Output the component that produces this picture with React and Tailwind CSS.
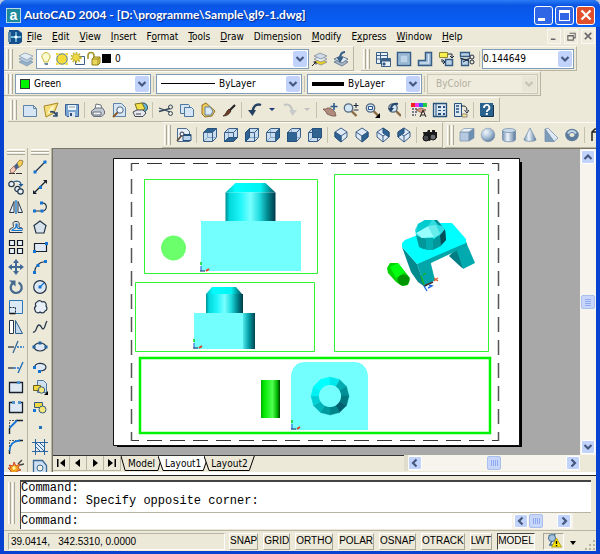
import React from "react";

const S = "#3a5f86";
const D = "#1d2b3f";
const B = "#1474d4";
const Y = "#f0d840";

function Cube({ face }) {
  const faces = {
    top: "1.5,5.5 5.5,1.5 14.5,1.5 10.5,5.5",
    bottom: "1.5,14.5 5.5,10.5 14.5,10.5 10.5,14.5",
    left: "1.5,5.5 5.5,1.5 5.5,10.5 1.5,14.5",
    right: "10.5,5.5 14.5,1.5 14.5,10.5 10.5,14.5",
    front: "1.5,5.5 10.5,5.5 10.5,14.5 1.5,14.5",
    back: "5.5,1.5 14.5,1.5 14.5,10.5 5.5,10.5",
  };
  return (
    <g strokeLinejoin="round" strokeWidth="1">
      <path d="M1.5 5.5 5.5 1.5h9v9l-4 4h-9z" fill="#c9dcf0" stroke={S} />
      <path d="M5.5 1.5v9h9M5.5 10.5l-4 4" fill="none" stroke="#86a8c8" />
      <polygon points={faces[face]} fill="#2f6594" stroke="#24507a" />
      <path d="M1.5 5.5h9v9M10.5 5.5l4-4" fill="none" stroke={S} />
    </g>
  );
}

function Iso({ face }) {
  const faces = {
    sw: "2,5 8,9 8,15 2,10",
    se: "8,9 14,5 14,10 8,15",
    ne: "8,1 14,5 14,10 8,6",
    nw: "2,5 8,1 8,6 2,10",
  };
  return (
    <g strokeLinejoin="round">
      <path d="M8 1 14 5v5l-6 5-6-5V5z" fill="#dfeaf6" stroke={S} />
      <polygon points={faces[face]} fill="#2f6594" stroke="#24507a" />
      <path d="M2 5l6 4 6-4M8 9v6" fill="none" stroke={S} />
    </g>
  );
}

const Lens = ({ x = 6.5, y = 6 }) => (
  <g>
    <path d={`M${x + 3} ${y + 3} l5 5`} stroke="#8a6a45" strokeWidth="2.4" />
    <circle cx={x} cy={y} r="4.2" fill="#d3e6f5" stroke="#55697c" strokeWidth="1.3" />
  </g>
);

const icons = {
  layers: (
    <g stroke="#7d93ab" strokeWidth=".7">
      <path d="M1 11l6-3 8 3-6 4z" fill="#93b0cd" />
      <path d="M1 8l6-3 8 3-6 4z" fill="#b9cde0" />
      <path d="M1 5l6-3 8 3-6 4z" fill="#e2ecf5" />
    </g>
  ),
  bulb: (
    <g>
      <path d="M8 1.5a4.2 4.2 0 0 1 2.5 7.5L10 11H6L5.500 9A4.200 4.200 0 0 1 8 1.500z" fill="#fdfbd0" stroke="#c9b83a" />
      <path d="M6 12h4v2H7z" fill="#6b8aa8" />
    </g>
  ),
  sun: (
    <g>
      <path d="M2 2h12v12H2z" fill="#f8f0a0" />
      <path d="M2 2h2v2H2zM12 2h2v2h-2zM2 12h2v2H2zM12 12h2v2h-2z" fill={Y} />
      <circle cx="8" cy="8" r="5.200" fill="#f6dc38" stroke="#5b86a8" />
    </g>
  ),
  sunView: (
    <g>
      <path d="M5.500 5.500h9v8h-9z" fill="#fff" stroke={S} />
      <circle cx="6" cy="6.500" r="4.600" fill="none" stroke="#c4b428" strokeWidth="2" strokeDasharray="1.500 1.500" />
      <circle cx="6" cy="6.500" r="3.600" fill={Y} stroke="#b5a52c" strokeWidth=".7" />
    </g>
  ),
  lock: (
    <g>
      <path d="M2 8V4.500a3 3 0 0 1 6 0V8" fill="none" stroke="#a3962c" strokeWidth="1.600" />
      <path d="M6 8l2-2h6v6l-2 2H6z" fill="#e9d75c" stroke="#8f7e18" />
      <path d="M6 8h6v6M12 8l2-2" fill="none" stroke="#8f7e18" strokeWidth=".8" />
    </g>
  ),
  layerCurrent: (
    <g stroke="#74808c" strokeWidth=".7">
      <path d="M2 11l6-3 7 3-6 3z" fill="#f0d020" />
      <path d="M2 8l6-3 7 3-6 3z" fill="#e8eef5" />
      <path d="M2 5l6-3 7 3-6 3z" fill="#cfdbe8" />
      <path d="M0 15l4-4M1.500 11H4v2.500" stroke="#222" strokeWidth="1" fill="none" />
    </g>
  ),
  layerPrev: (
    <g>
      <path d="M1 11l7-3 7 3-6 4z" fill="#a9b9ca" stroke="#6c7f94" />
      <path d="M1 8l7-3 7 3-6 4z" fill="#e2eaf2" stroke="#6c7f94" />
      <path d="M12 1C8 1 7 4 7 8M4.500 6L7 10l2.500-4" fill="none" stroke={S} strokeWidth="2" />
    </g>
  ),
  vports: (
    <g fill="#e7f0f8" stroke={S}>
      <path d="M1.500 1.500h11v11h-11z" />
      <path d="M1.500 4.500h11M5.500 1.500v11M1.500 8h4" />
      <path d="M6.500 7.500h9v8h-9z" />
      <path d="M7 8h8v2H7zM8 12h2v2H8z" fill={S} />
    </g>
  ),
  vport: (
    <g>
      <path d="M1.500 1.500h13v13h-13z" fill="#a9c4dd" stroke="#345c85" strokeWidth="1.500" />
      <path d="M4 4h8v8H4z" fill="#bcd3e8" stroke="#86a8c8" />
    </g>
  ),
  polyVport: (
    <g>
      <path d="M8.500 1.500h6v13h-13v-5h7z" fill="#a4c1dc" stroke="#345c85" strokeWidth="1.500" />
      <path d="M11.500 3v9H3" fill="none" stroke="#dbe8f4" />
    </g>
  ),
  convert: (
    <g>
      <path d="M1.500 1.500h8v5h-8z" fill="#f7ee50" stroke="#8c8530" />
      <path d="M7.500 8.500h7v6h-7z" fill="#b9d0e5" stroke="#345c85" strokeWidth="1.500" />
      <path d="M10 3h4v3M12 5l2 2 2-2M4 8v3h2M5 9l2 2-2 2" fill="none" stroke={D} />
    </g>
  ),
  clipVport: (
    <g>
      <path d="M1.500 1.500h9v4h-9zM2.500 8.500h7v6h-7z" fill="#b9d0e5" stroke="#345c85" strokeWidth="1.300" />
      <path d="M1 7l9 3M4 11l7-4" stroke={D} />
      <circle cx="13" cy="6" r="2" fill="none" stroke={D} />
      <circle cx="13" cy="11" r="2" fill="none" stroke={D} />
    </g>
  ),
  doc: (
    <path d="M1.500 3.500h10l3 3v8h-13zM11.500 3.500v3h3" fill="#d5e5f4" stroke="#5f84a8" />
  ),
  open: (
    <g>
      <path d="M1 4l5-1 9-2-4 10-8 4z" fill="#f4dc78" stroke="#a88828" />
      <path d="M4 12l4-7 4-2-3 7z" fill="#fff6c8" />
      <path d="M7 10c3-1 5 0 6 3M14 10v4h-4" fill="none" stroke="#2c4a70" strokeWidth="1.500" />
    </g>
  ),
  save: (
    <g>
      <path d="M1.500 2.500h13v12H3l-1.500-1.500z" fill="#7ba6d2" stroke="#3a5f94" />
      <path d="M4 3h8v5H4z" fill="#eef4fa" />
      <path d="M5 10h6v5H5z" fill="#dbe6f0" />
      <path d="M6 11h2v3H6z" fill="#2f4f78" />
      <path d="M5 5h6" stroke="#8aa" />
    </g>
  ),
  print: (
    <g stroke="#5b6472" strokeWidth=".9">
      <path d="M5 7l1-5 5 1 1 5z" fill="#fff" />
      <path d="M1.500 9l4-3h7l2 3v3l-3 2.500h-8L1.500 12z" fill="#c3cad4" />
      <path d="M3 10h8v3H3z" fill="#eef1f5" />
    </g>
  ),
  preview: (
    <g>
      <path d="M2.500 1.500h8l4 4v9h-12z" fill="#d5e5f4" stroke="#5f84a8" />
      <path d="M7 10l-5 5" stroke="#8a5a2c" strokeWidth="2" />
      <circle cx="9" cy="8" r="3.200" fill="#eef6fc" stroke="#4b647d" />
    </g>
  ),
  publish: (
    <g>
      <circle cx="11" cy="5.500" r="4.500" fill="#63b8d8" stroke="#2f4658" />
      <path d="M3 2l7-1 3 6-7 3z" fill="#f2e04a" stroke="#80701c" />
      <path d="M1 10l4-2h6l3 3-3 3.500H3z" fill="#e5e8ee" stroke="#454b56" />
      <path d="M4 12h5" stroke="#444" />
    </g>
  ),
  cut: (
    <g fill="none" stroke="#35485d">
      <path d="M1 6l11 4M1 9.500l11-3" strokeWidth="1.300" />
      <circle cx="12.500" cy="5" r="2" />
      <circle cx="12.500" cy="11.500" r="2" />
    </g>
  ),
  copy: (
    <g fill="#d5e5f4" stroke="#4d779e">
      <path d="M1.500 2.500h8l1 1v8h-9z" />
      <path d="M5.500 5.500h7l2 2v7h-9z" />
    </g>
  ),
  paste: (
    <g>
      <path d="M2 3l4-2 9 8-3 5-7 1-3-3z" fill="#ecc95a" stroke="#94702a" />
      <path d="M5 5h5l3 4-2 4H5z" fill="#dbe9f6" stroke="#5f84a8" />
    </g>
  ),
  brush: (
    <g>
      <path d="M14 3L8 9" stroke="#222" strokeWidth="2.200" />
      <path d="M8 7l2 2c-2 4-5 5-8 5 3-1 3-5 6-7z" fill="#6d3d24" stroke="#32201a" strokeWidth=".7" />
    </g>
  ),
  undo: (
    <g fill="none" stroke="#234060">
      <path d="M14 3C9 1 5.500 5 5.500 11" strokeWidth="2.400" />
      <path d="M1 8l4.500 6L9 8z" fill="#234060" stroke="none" />
    </g>
  ),
  redo: (
    <g fill="none" stroke="#c2c4c4">
      <path d="M2 3c5-2 8.500 2 8.500 8" strokeWidth="2" />
      <path d="M7 8l3.500 6L15 8z" fill="#c9cbca" stroke="none" />
    </g>
  ),
  pan: (
    <g>
      <path d="M1 7l3 0 1-1 3 0 3 2 2 2 1 4-4 0-5-2-1-2z" fill="#b08a7c" stroke="#75574c" strokeWidth=".8" />
      <path d="M12 1v7M8.500 4.500h7" stroke="#2d5a8c" strokeWidth="1.600" />
    </g>
  ),
  zoomRt: (
    <g>
      <Lens x={5.5} y={6} />
      <path d="M13 1v5M10.500 3.500h5M10.500 8h5" stroke={D} strokeWidth="1.100" />
    </g>
  ),
  zoomWin: (
    <g>
      <Lens />
      <path d="M4.500 4.500h4v3h-4z" fill="#fff" stroke="#27558c" />
      <path d="M16 11v5h-5z" fill="#000" />
    </g>
  ),
  zoomPrev: (
    <g>
      <Lens x={8} y={6} />
      <path d="M13 2C9 1 6 3 6 7" fill="none" stroke="#23456c" strokeWidth="2" />
      <path d="M3 6l3 4 3-4z" fill="#23456c" />
    </g>
  ),
  props: (
    <g>
      <path d="M0 1h4v4H0z" fill="#e22" />
      <path d="M4 1h4v4H4z" fill="#e3e" />
      <path d="M8 1h4v4H8z" fill="#2a6be8" />
      <path d="M12 1h4v4h-4z" fill="#2c4" />
      <path d="M1 7h5M1 10h5M1 13h4" stroke="#557" strokeWidth="1.500" strokeDasharray="2 1" />
      <path d="M5 8l5-2 5 2-4 3z" fill="#d89c84" stroke="#7c4f3e" strokeWidth=".7" />
      <path d="M9 15l3-7 3 7M10 13h4" fill="none" stroke="#222" />
    </g>
  ),
  center: (
    <g>
      <path d="M1.500 1.500h13v13h-13z" fill="#dbe7f2" stroke="#27507a" strokeWidth="1.300" />
      <path d="M4 2v12" stroke="#27507a" />
      <path d="M6 4h3v2H6zM11 4h2v2h-2zM6 8h3v1H6zM11 8h2v1h-2zM6 11h3v2H6zM11 11h2v2h-2z" fill="#27507a" />
    </g>
  ),
  palettes: (
    <g>
      <path d="M1.500 1.500h7v13h-7z" fill="#dbe7f2" stroke="#27507a" />
      <path d="M3 4h3M3 7h3M3 10h3" stroke="#27507a" strokeWidth="1.500" />
      <path d="M8 4h3c2 0 3 2 3 5M11.500 8l2.500 3 2-3" fill="none" stroke={D} />
      <path d="M9 12h5v3H9z" fill="#f3e48a" stroke="#667" strokeWidth=".7" />
    </g>
  ),
  help: (
    <g>
      <path d="M1 1h13v13H1z" fill="#2a628e" />
      <path d="M2 14.500h12.500V3" fill="none" stroke="#16344f" />
      <path d="M5 6a2.700 2.700 0 1 1 4 2c-1 .7-1.200 1-1.200 2" fill="none" stroke="#fff" strokeWidth="1.800" />
      <path d="M6.800 11h2v2h-2z" fill="#fff" />
    </g>
  ),
  namedViews: (
    <g>
      <path d="M1.500 1.500h9l3 3v10h-12z" fill="#e6eef7" stroke="#4d6c8c" />
      <path d="M7 7.500h8v6H7z" fill="#bcd5ec" stroke="#24507a" />
      <path d="M7 7h8v2H7z" fill="#24507a" />
      <path d="M1 14l5-6" stroke="#6a4a30" strokeWidth="1.700" />
      <circle cx="6" cy="7" r="2" fill="#e8f2fa" stroke="#334" />
    </g>
  ),
  top: <Cube face="top" />,
  bottom: <Cube face="bottom" />,
  left: <Cube face="left" />,
  right: <Cube face="right" />,
  front: <Cube face="front" />,
  back: <Cube face="back" />,
  sw: <Iso face="sw" />,
  se: <Iso face="se" />,
  ne: <Iso face="ne" />,
  nw: <Iso face="nw" />,
  camera: (
    <g>
      <path d="M1 5h4l1-2h2v2h2V3h3v2h2v6l-4 1-1-2-2 4-4-1v-3H2z" fill="#1b1b1d" />
      <circle cx="4" cy="11" r="3" fill="#46484d" stroke="#111" />
      <circle cx="11" cy="10" r="3" fill="#6b6e74" stroke="#111" />
    </g>
  ),
  box: (
    <g stroke="#7a93ae" strokeWidth=".7">
      <path d="M1 5h9v9H1z" fill="#b5cae0" />
      <path d="M1 5l4-3.500h10L10 5z" fill="#e7eff7" />
      <path d="M10 5l5-3.500V11l-5 3z" fill="#6d8fb2" />
    </g>
  ),
  sphere: <circle cx="8" cy="8" r="6.800" fill="url(#ball)" stroke="#7d93ad" strokeWidth=".6" />,
  cylinder: (
    <g stroke="#6f8aa8" strokeWidth=".7">
      <path d="M1.500 3.500v9c0 3 13 3 13 0v-9z" fill="url(#tube)" />
      <ellipse cx="8" cy="3.500" rx="6.500" ry="2" fill="#c9daea" />
    </g>
  ),
  cone: <path d="M8 1l6 11.500c0 2.500-12 2.500-12 0z" fill="url(#tube)" stroke="#6f8aa8" strokeWidth=".7" />,
  wedge: (
    <g stroke="#6f8aa8" strokeWidth=".7">
      <path d="M2 2l3-1 10 10-4 3.500z" fill="#dfe9f3" />
      <path d="M2 2l9 12.500H2z" fill="#7d9cbc" />
    </g>
  ),
  torus: (
    <g>
      <ellipse cx="8" cy="8" rx="4.700" ry="4.200" fill="none" stroke="#5d7c9d" strokeWidth="4.200" />
      <path d="M4 6.500c2-3.500 6-3.500 8 0" fill="none" stroke="#c4d6e8" strokeWidth="2" />
    </g>
  ),
  extrude: (
    <g fill="none" stroke="#222">
      <path d="M2 14V5l3-3h11M2 5h14" strokeWidth="1.500" />
    </g>
  ),
  erase: (
    <g>
      <path d="M1 14.500h13" stroke="#333" strokeDasharray="6 1" />
      <path d="M9 4l3-3 3 1-1 4-4 3z" fill="#f5cf55" stroke="#8a7235" strokeWidth=".8" />
      <path d="M6 7l3-3 2 4-3 3z" fill="#47628e" />
      <path d="M2 11l4-4 2 4-3 3H3z" fill="#f2c9bd" stroke="#8c594a" strokeWidth=".8" />
    </g>
  ),
  copyObj: (
    <g fill="#e8f0f8" stroke="#25364a" strokeWidth="1.200">
      <circle cx="3.500" cy="5" r="2.700" />
      <circle cx="9.500" cy="10" r="2.700" />
      <circle cx="12.500" cy="12.500" r="2.700" />
      <path d="M6 2.500c4-1 7 0 7 3" fill="none" stroke="#1e5a94" />
      <path d="M10.500 5l2.500 3 2.500-3z" fill="#1e5a94" stroke="none" />
    </g>
  ),
  mirror: (
    <g>
      <path d="M6 2.500v11H1.500zM10 2.500v11h4.500z" fill="#e8f0f8" stroke="#25364a" />
      <path d="M8 1v14" stroke={B} strokeWidth="1.300" />
    </g>
  ),
  offset: (
    <g fill="none">
      <path d="M14.500 13.500h-13v-2c0-3 4-2 4-4s-2-5 2.500-5 3 3 3 5 3.500 0 3.500 3" stroke="#25364a" />
      <path d="M14.500 11.500H4c0-2 4-1 4-4V5h1v3c0 2 3 1.500 5 1.500" stroke={B} strokeWidth="1.200" />
    </g>
  ),
  array: (
    <path d="M1.500 1.500h5v5h-5zM9.500 1.500h5v5h-5zM1.500 9.500h5v5h-5zM9.500 9.500h5v5h-5z" fill="#eef4fa" stroke="#111a28" strokeWidth="1.200" />
  ),
  move: (
    <path d="M8 0l3 4H9v3h3V5l4 3-4 3V9H9v3h2l-3 4-3-4h2V9H4v2L0 8l4-3v2h3V4H5z" fill="#3f6a98" />
  ),
  rotate: (
    <g fill="none" stroke="#44688e">
      <path d="M10.500 3.500a5.500 5.500 0 1 1-5.500.5" strokeWidth="2.200" />
      <path d="M1 1.500h6.500v6z" fill="#44688e" stroke="none" />
    </g>
  ),
  scale: (
    <g>
      <path d="M1.500 1.500h13v13h-13z" fill="#dce9f5" stroke="#2b77b8" />
      <path d="M1.500 8.500h6v6" fill="none" stroke="#16283c" strokeDasharray="2 1" />
      <path d="M1.500 14.500h6" stroke="#111" strokeWidth="1.500" />
    </g>
  ),
  stretch: (
    <g>
      <path d="M1.500 1.500h4v13h-4z" fill="#fff" stroke="#25364a" />
      <path d="M7.500 1.500l7 13h-7z" fill="#c6daec" stroke="#2b5f94" />
    </g>
  ),
  trim: (
    <g>
      <path d="M0 8h6" stroke="#25364a" strokeWidth="1.300" />
      <path d="M9 8h7" stroke={B} strokeWidth="1.300" strokeDasharray="2 1" />
      <path d="M5 14l5-12" stroke="#2b5f94" strokeWidth="1.200" />
    </g>
  ),
  extend: (
    <g>
      <path d="M0 9h6" stroke="#25364a" strokeWidth="1.300" />
      <path d="M6 9h6" stroke={B} strokeWidth="1.300" strokeDasharray="2 1" />
      <path d="M10 14l5-11" stroke="#1668b0" strokeWidth="1.300" />
    </g>
  ),
  breakPt: (
    <g>
      <path d="M1.500 3.500h13v10h-13z" fill="#dfe9f3" stroke="#16202e" strokeWidth="1.300" />
      <path d="M9 2h3v3H9z" fill="#4c93d0" />
    </g>
  ),
  break: (
    <g>
      <path d="M5 3.500H1.500v10h13v-10H11" fill="#dfe9f3" stroke="#16202e" strokeWidth="1.300" />
      <path d="M4 2h3v3H4zM10 2h3v3h-3z" fill="#4c93d0" />
    </g>
  ),
  chamfer: (
    <g fill="none">
      <path d="M1.500 15V9M8 1.500h7" stroke="#16202e" strokeWidth="1.400" />
      <path d="M1.500 8V1.500H8" stroke="#555" strokeDasharray="2 1" />
      <path d="M1.500 9L9 1.500" stroke={B} strokeWidth="1.800" />
    </g>
  ),
  fillet: (
    <g fill="none">
      <path d="M1.500 15v-4M11 1.500h4" stroke="#16202e" strokeWidth="1.400" />
      <path d="M1.500 8V1.500H8" stroke="#555" strokeDasharray="2 1" />
      <path d="M1.500 12C2 5 5 2 12 1.500" stroke={B} strokeWidth="1.800" />
    </g>
  ),
  explode: (
    <g>
      <path d="M0 9l3 0-2-3 4 1 1-4 2 4 4-2-2 4 3 2-4 1 0 4-3-3-4 3 1-4z" fill="#f4a320" stroke="#c03018" strokeWidth=".8" />
      <circle cx="6" cy="9" r="1.700" fill="#fff79a" />
      <path d="M10 5l4-4M12 6l4-1" stroke="#444" strokeWidth="1.400" />
    </g>
  ),
  line: (
    <g>
      <path d="M3 13L13 3" stroke="#25364a" strokeWidth="1.300" />
      <path d="M1.500 11.500h3v3h-3zM11.500 1.500h3v3h-3z" fill={B} />
    </g>
  ),
  xline: (
    <g>
      <path d="M2 14L14 2" stroke="#16202e" strokeWidth="1.200" />
      <path d="M1 15v-4l4 4zM15 1v4l-4-4z" fill="#16202e" />
      <path d="M7 7h3v3H7z" fill={B} />
    </g>
  ),
  pline: (
    <g fill="none">
      <path d="M2 12h8M9 4c7-1 7 8 1 8" stroke="#25364a" strokeWidth="1.200" />
      <path d="M1 10.500h3v3H1zM8.500 10.500h3v3h-3zM8 2.500h3v3H8z" fill={B} />
    </g>
  ),
  polygon: <path d="M8 2l6 4.500L12 14H4L2 6.500z" fill="#d7e2ec" stroke="#25364a" strokeWidth="1.200" />,
  rect: (
    <g>
      <path d="M2.500 4.500h12v8h-12z" fill="#dfe9f3" stroke="#16202e" strokeWidth="1.200" />
      <path d="M1 11h3v3H1zM13 3h3v3h-3z" fill={B} />
    </g>
  ),
  arc: (
    <g fill="none">
      <path d="M2.500 13.500C3 7 7 3 13.500 2.500" stroke="#25364a" strokeWidth="1.200" />
      <path d="M1 12h3v3H1zM4.500 5h3v3h-3zM12 1h3v3h-3z" fill={B} />
    </g>
  ),
  circle: (
    <g>
      <circle cx="8" cy="8" r="6.300" fill="#dfe9f3" stroke="#25364a" strokeWidth="1.200" />
      <path d="M8 8l4-4" stroke={B} strokeWidth="1.300" />
      <path d="M6.500 6.500h3v3h-3z" fill={B} />
    </g>
  ),
  revcloud: (
    <path d="M5 3a3 3 0 0 1 5 0 3 3 0 0 1 4 4 3 3 0 0 1-1 5 3 3 0 0 1-5 1 3 3 0 0 1-5-2 3 3 0 0 1 1-4 2.500 2.500 0 0 1 1-4z" fill="#e8eff6" stroke="#25364a" strokeWidth="1.200" />
  ),
  spline: <path d="M1 13c4 1 3-7 6-7s2 4 4 4 2-5 4-8" fill="none" stroke="#25364a" strokeWidth="1.300" />,
  ellipse: (
    <g>
      <ellipse cx="8" cy="8" rx="6" ry="4" fill="#dfe9f3" stroke="#25364a" strokeWidth="1.200" />
      <path d="M0.500 6.500h3v3h-3zM12.500 6.500h3v3h-3zM6.500 2.500h3v3h-3z" fill="#1d5f9f" />
    </g>
  ),
  ellipseArc: (
    <g>
      <path d="M3 9c-2-6 11-6 11-1 0 3-4 4-7 4" fill="#dfe9f3" stroke="#25364a" strokeWidth="1.200" />
      <path d="M1 7h3v3H1zM6 11h3v3H6z" fill={B} />
    </g>
  ),
  insert: (
    <g>
      <path d="M5.500 1.500h6l3 3v9h-9z" fill="#cfe0f0" stroke="#4d779e" />
      <path d="M1.500 6.500h7v5h-7z" fill={Y} stroke="#6b6318" />
      <circle cx="9.500" cy="11" r="3.200" fill="#f6e97a" stroke="#345c85" />
      <path d="M16 12v4h-4z" fill="#000" />
    </g>
  ),
  block: (
    <g>
      <path d="M2.500 3.500h8v5h-8z" fill={Y} stroke="#345c85" />
      <circle cx="10.500" cy="10.500" r="3.500" fill="#f6e97a" stroke="#345c85" />
      <path d="M1 10h3v3H1z" fill={B} />
    </g>
  ),
  point: <path d="M7 7h3v3H7z" fill="#2272b8" />,
  hatch: (
    <g>
      <path d="M3.500 3.500h9v9h-9z" fill="#e5eef7" stroke="#27507a" />
      <path d="M3.500 0v16M12.500 0v16M0 3.500h16M0 12.500h16M4 8l4 4M4 4l8 8M8 4l4 4" stroke="#2b65a0" />
    </g>
  ),
  region: (
    <g>
      <path d="M1.500 1.500h9l4 5v8h-13z" fill="#cfe0f0" stroke="#3a6a98" strokeWidth="1.300" />
      <circle cx="8" cy="9" r="3" fill="#f3f1e4" stroke="#3a6a98" />
    </g>
  ),
};

function Glyph({ name }) {
  return (
    <svg viewBox="0 0 16 16" className="h-4 w-4 shrink-0" aria-hidden="true">
      {icons[name]}
    </svg>
  );
}

function Tool({ name, tall }) {
  return (
    <button
      type="button"
      aria-label={name}
      className={
        tall
          ? "flex h-5 w-[21px] shrink-0 items-center justify-center"
          : "flex h-[21px] w-[21px] shrink-0 items-center justify-center"
      }
    >
      <Glyph name={name} />
    </button>
  );
}

function Grip() {
  return (
    <span className="mx-[2px] flex h-5 shrink-0 gap-px">
      <span className="w-[3px] border-l border-r border-l-white border-r-[#aca899]" />
      <span className="w-[3px] border-l border-r border-l-white border-r-[#aca899]" />
    </span>
  );
}

const Sep = () => <span className="mx-[2px] h-4 w-px shrink-0 bg-[#c5c2b0]" />;

function Bar({ label, children }) {
  return (
    <div
      role="toolbar"
      aria-label={label}
      className="flex shrink-0 items-center border-b border-r border-t border-b-[#b8b5a2] border-r-[#b8b5a2] border-t-[#fbfaf5] pr-[2px]"
    >
      <Grip />
      {children}
    </div>
  );
}

function Chevron({ dir = "down", color = "#45597e" }) {
  const d = {
    down: "M1.500 3L5 6.500 8.500 3",
    up: "M1.500 7L5 3.500 8.500 7",
    left: "M6.500 1.500L3 5l3.500 3.500",
    right: "M3.500 1.500L7 5 3.500 8.500",
  }[dir];
  return (
    <svg viewBox="0 0 10 10" className="h-[10px] w-[10px]" aria-hidden="true">
      <path d={d} fill="none" stroke={color} strokeWidth="2.200" />
    </svg>
  );
}

function Combo({ label, value, width, disabled, children }) {
  return (
    <div
      className={`flex h-5 shrink-0 items-center border ${width} ${
        disabled ? "border-[#c9c7ba] bg-[#efecdd] text-[#b3b0a0]" : "border-[#7f9db9] bg-white"
      }`}
    >
      {children}
      <select
        aria-label={label}
        disabled={disabled}
        className="h-full min-w-0 flex-1 appearance-none bg-transparent outline-none"
      >
        <option>{value}</option>
      </select>
      <span
        className={`m-px flex h-4 w-[14px] shrink-0 items-center justify-center rounded-[2px] ${
          disabled ? "bg-[#e8e5d6]" : "bg-[#c1d3fb]"
        }`}
      >
        <Chevron color={disabled ? "#c4c2b4" : "#45597e"} />
      </span>
    </div>
  );
}

function ScrollButton({ dir }) {
  return (
    <button
      type="button"
      aria-label={`Scroll ${dir}`}
      className="flex h-[14px] w-[14px] shrink-0 items-center justify-center rounded-[2px] border border-white bg-[#c1d3fb]"
    >
      <Chevron dir={dir} />
    </button>
  );
}

function Thumb({ vertical }) {
  return (
    <span
      className={`flex h-[14px] w-[14px] shrink-0 items-center justify-center gap-px rounded-[2px] border border-[#a9bfee] bg-[#c8d6fb] ${
        vertical ? "flex-col" : ""
      }`}
    >
      {[0, 1, 2, 3].map((i) => (
        <span key={i} className={vertical ? "h-px w-[6px] bg-[#8faaf0]" : "h-[6px] w-px bg-[#8faaf0]"} />
      ))}
    </span>
  );
}

const menus = [
  ["", "F", "ile"],
  ["", "E", "dit"],
  ["", "V", "iew"],
  ["", "I", "nsert"],
  ["F", "o", "rmat"],
  ["", "T", "ools"],
  ["", "D", "raw"],
  ["Dime", "n", "sion"],
  ["", "M", "odify"],
  ["E", "x", "press"],
  ["", "W", "indow"],
  ["", "H", "elp"],
];

const modifyTools = ["erase", "copyObj", "mirror", "offset", "array", "move", "rotate", "scale", "stretch", "trim", "extend", "breakPt", "break", "chamfer", "fillet", "explode"];
const drawTools = ["line", "xline", "pline", "polygon", "rect", "arc", "circle", "revcloud", "spline", "ellipse", "ellipseArc", "insert", "block", "point", "hatch", "region"];

function SideBar({ label, tools }) {
  return (
    <div role="toolbar" aria-label={label} className="flex w-6 shrink-0 flex-col items-center border-r border-[#b8b5a2] pt-px">
      <span className="mb-[2px] flex w-[18px] shrink-0 flex-col">
        <span className="h-[3px] border-b border-t border-b-[#aca899] border-t-white" />
        <span className="h-[3px] border-b border-t border-b-[#aca899] border-t-white" />
      </span>
      {tools.map((t) => (
        <Tool key={t} name={t} tall />
      ))}
    </div>
  );
}

const ringColors = ["#00acb0", "#008f94", "#00777f", "#005f6c", "#00858a", "#009a9e", "#00b4b8", "#00d0d4", "#00f0f4", "#00ffff", "#00ffff", "#00e8ec"];

function Ring() {
  const pt = (r, i) => {
    const a = (i * Math.PI) / 6 - Math.PI / 3;
    return `${(330 + r * Math.cos(a)).toFixed(1)},${(396 + r * Math.sin(a)).toFixed(1)}`;
  };
  return ringColors.map((c, i) => (
    <polygon key={i} fill={c} stroke={c} strokeWidth=".4" points={`${pt(19, i)} ${pt(19, i + 1)} ${pt(11, i + 1)} ${pt(11, i)}`} />
  ));
}

function Ucs({ x, y }) {
  return (
    <g fill="none" strokeWidth="1.200">
      <path d={`M${x} ${y}v-5`} stroke="#3a6ed0" />
      <path d={`M${x} ${y - 6}v-3`} stroke="#10d020" strokeWidth="1.500" />
      <path d={`M${x - 1} ${y}h5`} stroke="#334a7a" />
      <path d={`M${x + 5} ${y}l3-2`} stroke="#e03818" strokeWidth="1.800" />
    </g>
  );
}

function Paper() {
  return (
    <svg viewBox="111 158 412 290" width="412" height="290" className="shrink-0" role="img" aria-label="Layout1 drawing sheet">
      <defs>
        <linearGradient id="shaft">
          <stop offset="0" stopColor="#008c90" />
          <stop offset=".08" stopColor="#00d8dc" />
          <stop offset=".3" stopColor="#20f6fa" />
          <stop offset=".5" stopColor="#78ffff" />
          <stop offset=".68" stopColor="#20dce0" />
          <stop offset=".85" stopColor="#00858c" />
          <stop offset="1" stopColor="#003848" />
        </linearGradient>
        <linearGradient id="capGrad">
          <stop offset="0" stopColor="#00b8bc" />
          <stop offset=".2" stopColor="#00ffff" />
          <stop offset=".7" stopColor="#00f4f4" />
          <stop offset=".85" stopColor="#00a4a8" />
          <stop offset="1" stopColor="#005060" />
        </linearGradient>
        <linearGradient id="edge">
          <stop offset="0" stopColor="#50e8ec" />
          <stop offset=".5" stopColor="#009ca4" />
          <stop offset="1" stopColor="#004450" />
        </linearGradient>
        <linearGradient id="rod">
          <stop offset="0" stopColor="#00a800" />
          <stop offset=".15" stopColor="#00e800" />
          <stop offset=".6" stopColor="#50ff50" />
          <stop offset=".85" stopColor="#00b800" />
          <stop offset="1" stopColor="#003c00" />
        </linearGradient>
      </defs>
      <path d="M117 162h405v285H117z" fill="#000" />
      <path d="M113.500 158.500h406v287h-406z" fill="#fff" stroke="#111" />
      <path d="M131 163.500h368M131 440.500h368" stroke="#333" strokeWidth="1" strokeDasharray="15 8" strokeDashoffset="7" />
      <path d="M131.500 163v278M498.500 163v278" stroke="#555" strokeWidth="1.500" strokeDasharray="15 8" strokeDashoffset="7" />
      <g fill="none" stroke="#30f430">
        <path d="M144.500 179.500h173v94h-173zM135.500 282.500h179v69h-179zM334.500 174.500h154v177h-154z" />
        <path d="M140 358h350v75H140z" stroke="#00f400" strokeWidth="2.500" />
      </g>

      <circle cx="173.500" cy="248" r="12.500" fill="#6cff6c" />
      <path d="M225.500 192.500l10-9.500h30l10 9.500z" fill="url(#capGrad)" />
      <path d="M225.500 192.500h50V221h-50z" fill="url(#shaft)" />
      <path d="M201 221h100v50H201z" fill="#74ffff" />
      <Ucs x={201} y={271} />

      <path d="M206 294l6-7h24l6 7z" fill="url(#capGrad)" />
      <path d="M206 294h37v19h-37z" fill="url(#shaft)" />
      <path d="M194 313h61v36h-61z" fill="#74ffff" />
      <path d="M243 313h12v36h-12z" fill="url(#edge)" />
      <Ucs x={194} y={348} />

      <path d="M261 380h19v38h-19z" fill="url(#rod)" />
      <path d="M291 430v-53c0-9 6-15 14-15h49c8 0 14 6 14 15v53z" fill="#74ffff" />
      <Ring />
      <circle cx="330" cy="396" r="11" fill="#74ffff" />
      <Ucs x={292} y={429} />

      <polygon points="402,247 417,264 425,287 418,282 411,272" fill="#008a8e" />
      <polygon points="417,264 430,260 435,280 425,287" fill="#00a6aa" />
      <polygon points="449,256 458,247 463,268 462,268" fill="#007e84" />
      <polygon points="456,248 466,242 475,263 463,269" fill="#00aaae" />
      <polygon points="417,264 466,241 467,246 450,254 431,263 425,268" fill="#00a6aa" />
      <polygon points="402,247 402,243 405,240 415,236 440,223 452,223 466,239 466,243 417,264" fill="#00ffff" />
      <polygon points="416,235 422,238 434,239 445,229 446,240 441,246 433,250 423,249 419,247" fill="#00969a" />
      <polygon points="426,238 433,238 433,250 426,250" fill="#00acb0" />
      <polygon points="440,235 445,229 446,240 441,245" fill="#004e58" />
      <polygon points="415,230 418,224 425,220 437,220 442,225 445,229 440,235 434,238 422,238 416,235" fill="#30dce0" />
      <polygon points="416,233 428,226 434,237 422,238" fill="#98ffff" />
      <polygon points="428,226 436,225 440,234 434,238" fill="#68ecec" />
      <polygon points="418,224 425,220 432,220 428,226 416,233" fill="#00ccd0" />
      <polygon points="434,220 437,220 442,226 438,225" fill="#008c94" />

      <polygon points="387,268 390,263 398,263 410,278 408,285 402,286 396,282 388,273" fill="#00d400" />
      <polygon points="390,267 398,263 405,272 396,278" fill="#00ff10" />
      <ellipse cx="403.500" cy="280" rx="6" ry="5.500" fill="#009400" />

      <path d="M421 276l3 8M423 275l3-2" stroke="#18b020" strokeWidth="1.400" fill="none" />
      <path d="M424 286l9-4" stroke="#4b3430" strokeWidth="1.800" />
      <path d="M434 278l4 3M434 281l4-3" stroke="#e06030" strokeWidth="1.300" />
      <path d="M424 286l3 5M428 288l4-2-3-1" stroke="#1c6ee0" strokeWidth="1.400" fill="none" />
    </svg>
  );
}

function NavButton({ label, d }) {
  return (
    <button type="button" aria-label={label} className="flex h-[15px] w-[17px] items-center justify-center border-b border-r border-b-[#b8b5a2] border-r-[#b8b5a2]">
      <svg viewBox="0 0 10 10" className="h-[10px] w-[10px]" aria-hidden="true">
        <path d={d} fill="#000" />
      </svg>
    </button>
  );
}

function SheetTab({ label, active }) {
  return (
    <button type="button" className="relative -mr-1 flex h-[15px] items-center px-[7px]">
      <svg viewBox="0 0 50 15" preserveAspectRatio="none" className="absolute inset-0 h-full w-full" aria-hidden="true">
        <path d="M0 0h50l-5 14.500H5z" fill={active ? "#fff" : "#ece9d8"} />
        <path d="M0 0l5 14.500h40L50 0" fill="none" stroke="#000" vectorEffect="non-scaling-stroke" />
      </svg>
      <span className="relative">{label}</span>
    </button>
  );
}

const caption = "flex h-[19px] w-[19px] items-center justify-center rounded-[3px] border border-white";

export default function App() {
  return (
    <div className="h-screen overflow-hidden bg-[#b9c6e2]">
      <div className="flex h-full cursor-default flex-col overflow-hidden rounded-t-[7px] bg-[#0842d0] px-1 pb-[3px] font-['DejaVu_Sans_Condensed','DejaVu_Sans',sans-serif] text-[10px] leading-3 text-black">
        <svg width="0" height="0" className="absolute" aria-hidden="true">
          <defs>
            <radialGradient id="ball" cx=".35" cy=".3" r=".8">
              <stop offset="0" stopColor="#f2f7fc" />
              <stop offset=".5" stopColor="#a9c0d8" />
              <stop offset="1" stopColor="#4f7096" />
            </radialGradient>
            <linearGradient id="tube">
              <stop offset="0" stopColor="#7192b4" />
              <stop offset=".4" stopColor="#eff5fb" />
              <stop offset="1" stopColor="#56779b" />
            </linearGradient>
          </defs>
        </svg>

        <header className="-mx-1 flex h-[27px] shrink-0 items-center bg-linear-to-b from-[#2b7cf6] via-[#0a55e4] via-20% to-[#0660fa] pl-[6px] pr-[5px] pt-[3px]">
          <span className="flex h-[15px] w-[15px] items-center justify-center border border-[#b7d9e4] bg-[#1c8a9c] font-['Liberation_Sans',sans-serif] text-[14px] font-bold leading-3 text-white">
            a
          </span>
          <h1 className="ml-[3px] flex-1 truncate font-['Lato',sans-serif] text-[12px] font-bold leading-4 text-white [text-shadow:1px_1px_1px_#0a2a80]">
            AutoCAD 2004 - [D:\programme\Sample\gl9-1.dwg]
          </h1>
          <div className="flex gap-[2px]">
            <button type="button" aria-label="Minimize" className={`${caption} bg-[#2f66e6]`}>
              <span className="mr-1 mt-2 h-[3px] w-[7px] bg-white" />
            </button>
            <button type="button" aria-label="Maximize" className={`${caption} bg-[#2f66e6]`}>
              <span className="h-[11px] w-[11px] border border-t-[3px] border-white" />
            </button>
            <button type="button" aria-label="Close" className={`${caption} bg-[#e0502c]`}>
              <svg viewBox="0 0 12 12" className="h-3 w-3" aria-hidden="true">
                <path d="M1.500 1.500l9 9M10.500 1.500l-9 9" stroke="#fff" strokeWidth="2.200" />
              </svg>
            </button>
          </div>
        </header>

        <div className="flex min-h-0 flex-1 flex-col bg-[#ece9d8]">
          <div className="flex h-[19px] shrink-0 items-center pl-1">
            <svg viewBox="0 0 14 14" className="h-[14px] w-[14px]" aria-hidden="true">
              <path d="M1 0h9l4 3v9l-3 2H1z" fill="#16508c" />
              <path d="M0 2h3v10H0z" fill="#5e8fae" />
              <path d="M8 2v10M3 7h10" stroke="#8fe0f8" strokeWidth="1.300" />
              <circle cx="8" cy="7" r="1.600" fill="#fff" />
            </svg>
            <nav className="flex flex-1 items-center">
              {menus.map(([a, u, b]) => (
                <button key={a + u + b} type="button" className="px-[5px]">
                  {a}
                  <span className="underline">{u}</span>
                  {b}
                </button>
              ))}
            </nav>
            <div className="flex gap-[3px] pr-px">
              {["M2 9h5", "M4 2.500h6v5H8M2 5h6v5H2zM2 5.500h6", "M2 2l7 7M9 2L2 9"].map((d, i) => (
                <button key={d} type="button" aria-label={["Minimize drawing", "Restore drawing", "Close drawing"][i]} className="flex h-[15px] w-[14px] items-center justify-center border border-[#f8f7f0] bg-[#efecde]">
                  <svg viewBox="0 0 12 12" className="h-[11px] w-[11px]" aria-hidden="true">
                    <path d={d} fill="none" stroke="#666" strokeWidth={i === 1 ? 1.2 : 1.8} />
                  </svg>
                </button>
              ))}
            </div>
          </div>

          <div className="flex h-[25px] shrink-0 gap-[7px]">
            <Bar label="Layers">
              <Tool name="layers" />
              <Combo label="Layer" value="0" width="w-[273px]">
                <span className="flex shrink-0 items-center pl-px">
                  <Glyph name="bulb" />
                  <Glyph name="sun" />
                  <Glyph name="sunView" />
                  <Glyph name="lock" />
                  <span className="mr-1 h-[9px] w-[9px] bg-black" />
                </span>
              </Combo>
              <Tool name="layerCurrent" />
              <Tool name="layerPrev" />
            </Bar>
            <Bar label="Viewports">
              <Tool name="vports" />
              <Tool name="vport" />
              <Tool name="polyVport" />
              <Tool name="convert" />
              <Tool name="clipVport" />
              <Sep />
              <Combo label="Viewport scale" value="0.144649" width="w-[92px]" />
            </Bar>
          </div>

          <div className="flex h-[25px] shrink-0">
            <Bar label="Properties">
              <Combo label="Color" value="Green" width="w-[136px]">
                <span className="mx-1 h-[10px] w-[10px] shrink-0 border border-[#333] bg-[#00f400]" />
              </Combo>
              <Sep />
              <Combo label="Linetype" value="ByLayer" width="w-[146px]">
                <span className="mx-1 h-px w-[54px] shrink-0 bg-black" />
              </Combo>
              <Sep />
              <Combo label="Lineweight" value="ByLayer" width="w-[115px]">
                <span className="mx-1 h-[4px] w-[32px] shrink-0 bg-black" />
              </Combo>
              <Sep />
              <Combo label="Plot style" value="ByColor" width="w-[111px] pl-2" disabled />
            </Bar>
          </div>

          <div className="flex h-[26px] shrink-0 pl-1 pt-px">
            <Bar label="Standard">
              <Tool name="doc" />
              <Tool name="open" />
              <Tool name="save" />
              <Sep />
              <Tool name="print" />
              <Tool name="preview" />
              <Tool name="publish" />
              <Sep />
              <Tool name="cut" />
              <Tool name="copy" />
              <Tool name="paste" />
              <Tool name="brush" />
              <Sep />
              <Tool name="undo" />
              <span className="mx-1 h-0 w-0 border-x-[3px] border-t-[3px] border-x-transparent border-t-[#223a7c]" />
              <Tool name="redo" />
              <span className="mx-1 h-0 w-0 border-x-[3px] border-t-[3px] border-x-transparent border-t-[#c0c0c0]" />
              <Sep />
              <Tool name="pan" />
              <Tool name="zoomRt" />
              <Tool name="zoomWin" />
              <Tool name="zoomPrev" />
              <Sep />
              <Tool name="props" />
              <Tool name="center" />
              <Tool name="palettes" />
              <Sep />
              <Tool name="help" />
            </Bar>
          </div>

          <div className="flex h-[26px] shrink-0 gap-[2px] overflow-hidden pl-[158px]">
            <Bar label="View">
              <Tool name="namedViews" />
              <Sep />
              <Tool name="top" />
              <Tool name="bottom" />
              <Tool name="left" />
              <Tool name="right" />
              <Tool name="front" />
              <Tool name="back" />
              <Sep />
              <Tool name="sw" />
              <Tool name="se" />
              <Tool name="ne" />
              <Tool name="nw" />
              <Sep />
              <Tool name="camera" />
            </Bar>
            <Bar label="Solids">
              <Tool name="box" />
              <Tool name="sphere" />
              <Tool name="cylinder" />
              <Tool name="cone" />
              <Tool name="wedge" />
              <Tool name="torus" />
              <Sep />
              <Tool name="extrude" />
            </Bar>
          </div>

          <div className="flex min-h-0 flex-1 overflow-hidden">
            <SideBar label="Modify" tools={modifyTools} />
            <SideBar label="Draw" tools={drawTools} />
            <main className="flex min-w-0 flex-1 flex-col border-l border-t border-[#77756a]">
              <div className="flex min-h-0 flex-1">
                <div className="flex min-w-0 flex-1 justify-center overflow-hidden bg-[#a8a8a8] pt-[9px]">
                  <Paper />
                </div>
                <div className="flex w-4 shrink-0 flex-col items-center bg-[#f6f4ec] py-px">
                  <ScrollButton dir="up" />
                  <span className="flex flex-1 items-center">
                    <Thumb vertical />
                  </span>
                  <ScrollButton dir="down" />
                </div>
              </div>
              <div className="flex h-[17px] shrink-0 items-start">
                <div className="flex flex-1 border-t border-[#333]">
                  <NavButton label="First layout" d="M1 1h1.500v8H1zM9 1v8L4 5z" />
                  <NavButton label="Previous layout" d="M7 1v8L2 5z" />
                  <NavButton label="Next layout" d="M3 1v8l5-4z" />
                  <NavButton label="Last layout" d="M7.500 1H9v8H7.500zM1 1v8l5-4z" />
                  <SheetTab label="Model" />
                  <SheetTab label="Layout1" active />
                  <SheetTab label="Layout2" />
                </div>
                <div className="flex h-4 w-[176px] items-center border-l-4 border-[#e0ddcc] bg-[#f6f4ec]">
                  <ScrollButton dir="left" />
                  <span className="flex flex-1 justify-center">
                    <Thumb />
                  </span>
                  <ScrollButton dir="right" />
                </div>
                <span className="w-4" />
              </div>
            </main>
          </div>

          <section aria-label="Command line" className="flex shrink-0 border-t-[3px] border-white font-['Liberation_Mono',monospace] text-[12px]">
            <div className="flex flex-1 border-t border-[#222] pb-px pl-1 pr-[5px] pt-1">
              <span className="mr-[5px] mt-[2px] flex h-[42px] gap-px">
                <span className="w-[3px] border-l border-r border-l-white border-r-[#aca899]" />
                <span className="w-[3px] border-l border-r border-l-white border-r-[#aca899]" />
              </span>
              <div className="min-w-0 flex-1 border-l border-t-2 border-[#444] bg-white">
                <div className="h-[31px] overflow-hidden border-b border-[#b8b5a2] leading-[13px]">
                  <p>Command:</p>
                  <p>Command: Specify opposite corner:</p>
                </div>
                <div className="flex h-4 items-center">
                  <label htmlFor="cmd">Command:</label>
                  <input id="cmd" type="text" className="h-3 min-w-0 flex-1 bg-white outline-none" />
                  <div className="flex h-4 items-center gap-px bg-[#f6f4ec] px-[2px]">
                    <ScrollButton dir="left" />
                    <Thumb />
                    <span className="w-3" />
                    <ScrollButton dir="right" />
                  </div>
                  <span className="h-4 w-[18px] bg-[#ece9d8]" />
                </div>
              </div>
            </div>
          </section>

          <footer className="flex h-[21px] shrink-0 items-center border-t border-[#b8b5a2] pl-1 font-['Liberation_Sans',sans-serif] text-[10px]">
            <output className="mr-1 h-[17px] w-[217px] whitespace-pre border border-b-white border-l-[#b8b5a2] border-r-white border-t-[#b8b5a2] pl-[2px] leading-4">
              39.0414,   342.5310, 0.0000
            </output>
            <div className="flex gap-[5px]">
              {["SNAP", "GRID", "ORTHO", "POLAR", "OSNAP", "OTRACK", "LWT", "MODEL"].map((t) => (
                <button
                  key={t}
                  type="button"
                  className={`h-[17px] border ${
                    t === "MODEL"
                      ? "border-b-white border-l-[#444] border-r-white border-t-[#444] bg-[#f3f1e6]"
                      : "border-b-[#a8a594] border-l-white border-r-[#a8a594] border-t-white"
                  }`}
                >
                  {t}
                </button>
              ))}
            </div>
            <span className="flex-1" />
            <button type="button" aria-label="Communication Center" className="mr-[6px] flex h-[17px] w-[21px] shrink-0 items-center justify-center border border-b-white border-l-[#a8a594] border-r-white border-t-[#a8a594]">
              <svg viewBox="0 0 16 16" className="h-4 w-4" aria-hidden="true">
                <path d="M3 2l7 7M9 1L4 12h6" stroke="#3f6a94" strokeWidth="1.600" fill="none" />
                <circle cx="6" cy="5" r="3.500" fill="#a8c4dc" stroke="#3f6a94" />
                <path d="M10.500 5l5 9h-10z" fill="#ffe600" stroke="#9c8a00" strokeWidth=".7" />
                <path d="M10.500 8v3M10.500 12v1.200" stroke="#000" strokeWidth="1.400" />
              </svg>
            </button>
            <span className="mr-2 mt-1 h-0 w-0 border-x-[3px] border-t-[4px] border-x-transparent border-t-black" />
            <svg viewBox="0 0 12 12" className="mt-2 h-3 w-3" aria-hidden="true">
              <path d="M9 1h2v2H9zM9 5h2v2H9zM9 9h2v2H9zM5 5h2v2H5zM5 9h2v2H5zM1 9h2v2H1z" fill="#b8b5a2" />
            </svg>
          </footer>
        </div>
      </div>
    </div>
  );
}
